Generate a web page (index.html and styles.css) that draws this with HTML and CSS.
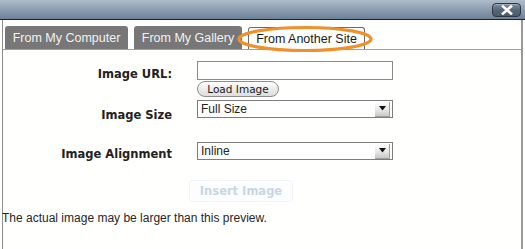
FILE: index.html
```html
<!DOCTYPE html>
<html>
<head>
<meta charset="utf-8">
<link rel="stylesheet" href="styles.css">
</head>
<body>
<div class="dialog">
  <div class="titlebar">
    <button class="close" type="button" aria-label="Close">
      <svg width="12" height="10" viewBox="0 0 12 10"><path d="M2 1.5 L10 8.5 M10 1.5 L2 8.5" stroke="#fff" stroke-width="2.6" stroke-linecap="square"/></svg>
    </button>
  </div>
  <div class="body">
    <div class="tabs">
      <div class="tab">From My Computer</div>
      <div class="tab">From My Gallery</div>
      <div class="tab active">From Another Site</div>
    </div>
    <div class="form">
      <label class="lbl lbl-url">Image URL:</label>
      <div class="ctrl">
        <input class="text" type="text">
        <button class="load" type="button">Load Image</button>
      </div>
      <label class="lbl lbl-size">Image Size</label>
      <div class="ctrl">
        <div class="select sel-size"><span class="val">Full Size</span><span class="arrow"><svg width="7" height="5" viewBox="0 0 7 5"><path d="M0 0 H7 L3.5 4.5 Z" fill="#111"/></svg></span></div>
      </div>
      <label class="lbl lbl-align">Image Alignment</label>
      <div class="ctrl">
        <div class="select sel-align"><span class="val">Inline</span><span class="arrow"><svg width="7" height="5" viewBox="0 0 7 5"><path d="M0 0 H7 L3.5 4.5 Z" fill="#111"/></svg></span></div>
      </div>
    </div>
    <div class="actions">
      <button class="insert" type="button" disabled>Insert Image</button>
    </div>
    <p class="note">The actual image may be larger than this preview.</p>
  </div>
  <svg class="highlight" width="140" height="30" viewBox="0 0 140 30"><ellipse cx="69" cy="14" rx="66" ry="11.5" fill="none" stroke="#f0902a" stroke-width="3.2"/></svg>
</div>
</body>
</html>
```
FILE: styles.css
```css
html, body {
  margin: 0;
  padding: 0;
  background: #fff;
}
.dialog {
  position: relative;
  width: 525px;
  height: 249px;
  overflow: hidden;
  font-family: "Liberation Sans", Arial, sans-serif;
  background: #fff;
}
.titlebar {
  height: 19px;
  border-bottom: 1px solid #1e2226;
  background: linear-gradient(#b0bdcb, #899bae 55%, #6d8197);
  display: flex;
  justify-content: flex-end;
  align-items: flex-start;
  padding-right: 4px;
}
.close {
  margin-top: 3px;
  width: 29px;
  height: 14px;
  padding: 0;
  border: 1px solid #2e3842;
  border-radius: 4px;
  background: linear-gradient(#7f90a2, #56677a 50%, #4b5b6c);
  display: flex;
  align-items: center;
  justify-content: center;
  box-shadow: inset 0 1px 0 rgba(255,255,255,0.25);
}
.body {
  margin-left: 2px;
  width: 518px;
  height: 229px;
  border-left: 1px solid #8e8e8e;
  border-right: 2px solid #9a9a9a;
  background: #fffffd;
}
.tabs {
  display: flex;
  align-items: flex-end;
  gap: 6px;
  height: 29px;
  padding-left: 2px;
  border-bottom: 1px solid #a0a0a0;
}
.tab {
  height: 23px;
  box-sizing: border-box;
  display: flex;
  align-items: center;
  justify-content: center;
  white-space: nowrap;
  font-size: 12.5px;
  color: #f2f2f2;
  background: #777;
  border-radius: 3px 3px 0 0;
}
.tab:nth-child(1) { width: 123px; }
.tab:nth-child(2) { width: 108px; }
.tab.active {
  width: 117px;
  height: 22px;
  background: #fff;
  color: #1a1a1a;
  border: 1px solid #6a6a6a;
  border-bottom: none;
}
.form {
  display: grid;
  grid-template-columns: 169px 196px;
  column-gap: 25px;
  margin-top: 11px;
}
.lbl {
  text-align: right;
  font-family: "DejaVu Sans", Verdana, sans-serif;
  font-weight: bold;
  font-size: 11.5px;
  color: #222;
}
.lbl-url { padding-top: 6px; }
.lbl-size { padding-top: 11px; }
.lbl-align { padding-top: 25px; }
.ctrl {
  display: flex;
  flex-direction: column;
  align-items: flex-start;
}
.text {
  width: 196px;
  height: 19px;
  box-sizing: border-box;
  margin: 0;
  border: 1px solid #8a8a8a;
  background: #fff;
}
.load {
  margin-top: 1px;
  height: 16px;
  width: 82px;
  padding: 0;
  border: 1px solid #8c8c8c;
  border-radius: 8px;
  background: linear-gradient(#ffffff, #ececec 50%, #dedede);
  font-family: "DejaVu Sans", sans-serif;
  font-size: 10.5px;
  color: #1a1a1a;
  line-height: 14px;
}
.select {
  width: 196px;
  height: 18px;
  box-sizing: border-box;
  border: 1px solid #7d7d7d;
  background: #fff;
  display: flex;
  align-items: center;
  justify-content: space-between;
  font-size: 12px;
  color: #222;
}
.sel-size { margin-top: 3px; }
.sel-align { margin-top: 20px; }
.val { padding-left: 3px; }
.arrow {
  width: 14px;
  height: 14px;
  margin-right: 2px;
  display: flex;
  align-items: center;
  justify-content: center;
  background: linear-gradient(#ffffff, #e4e4e4 60%, #c8c8c8);
  border-right: 1px solid #a0a0a0;
  border-bottom: 1px solid #a0a0a0;
}
.actions {
  display: flex;
  justify-content: center;
  margin-top: 19px;
  padding-right: 42px;
}
.insert {
  width: 104px;
  height: 22px;
  padding: 0;
  border: 1px solid #f2f4f7;
  border-radius: 3px;
  background: #fcfdfe;
  font-family: "DejaVu Sans", sans-serif;
  font-weight: bold;
  font-size: 11.5px;
  color: #c8d7e6;
}
.note {
  margin: 9px 0 0 -1px;
  font-size: 12px;
  color: #262626;
}
.highlight {
  position: absolute;
  left: 236px;
  top: 25px;
}
```
